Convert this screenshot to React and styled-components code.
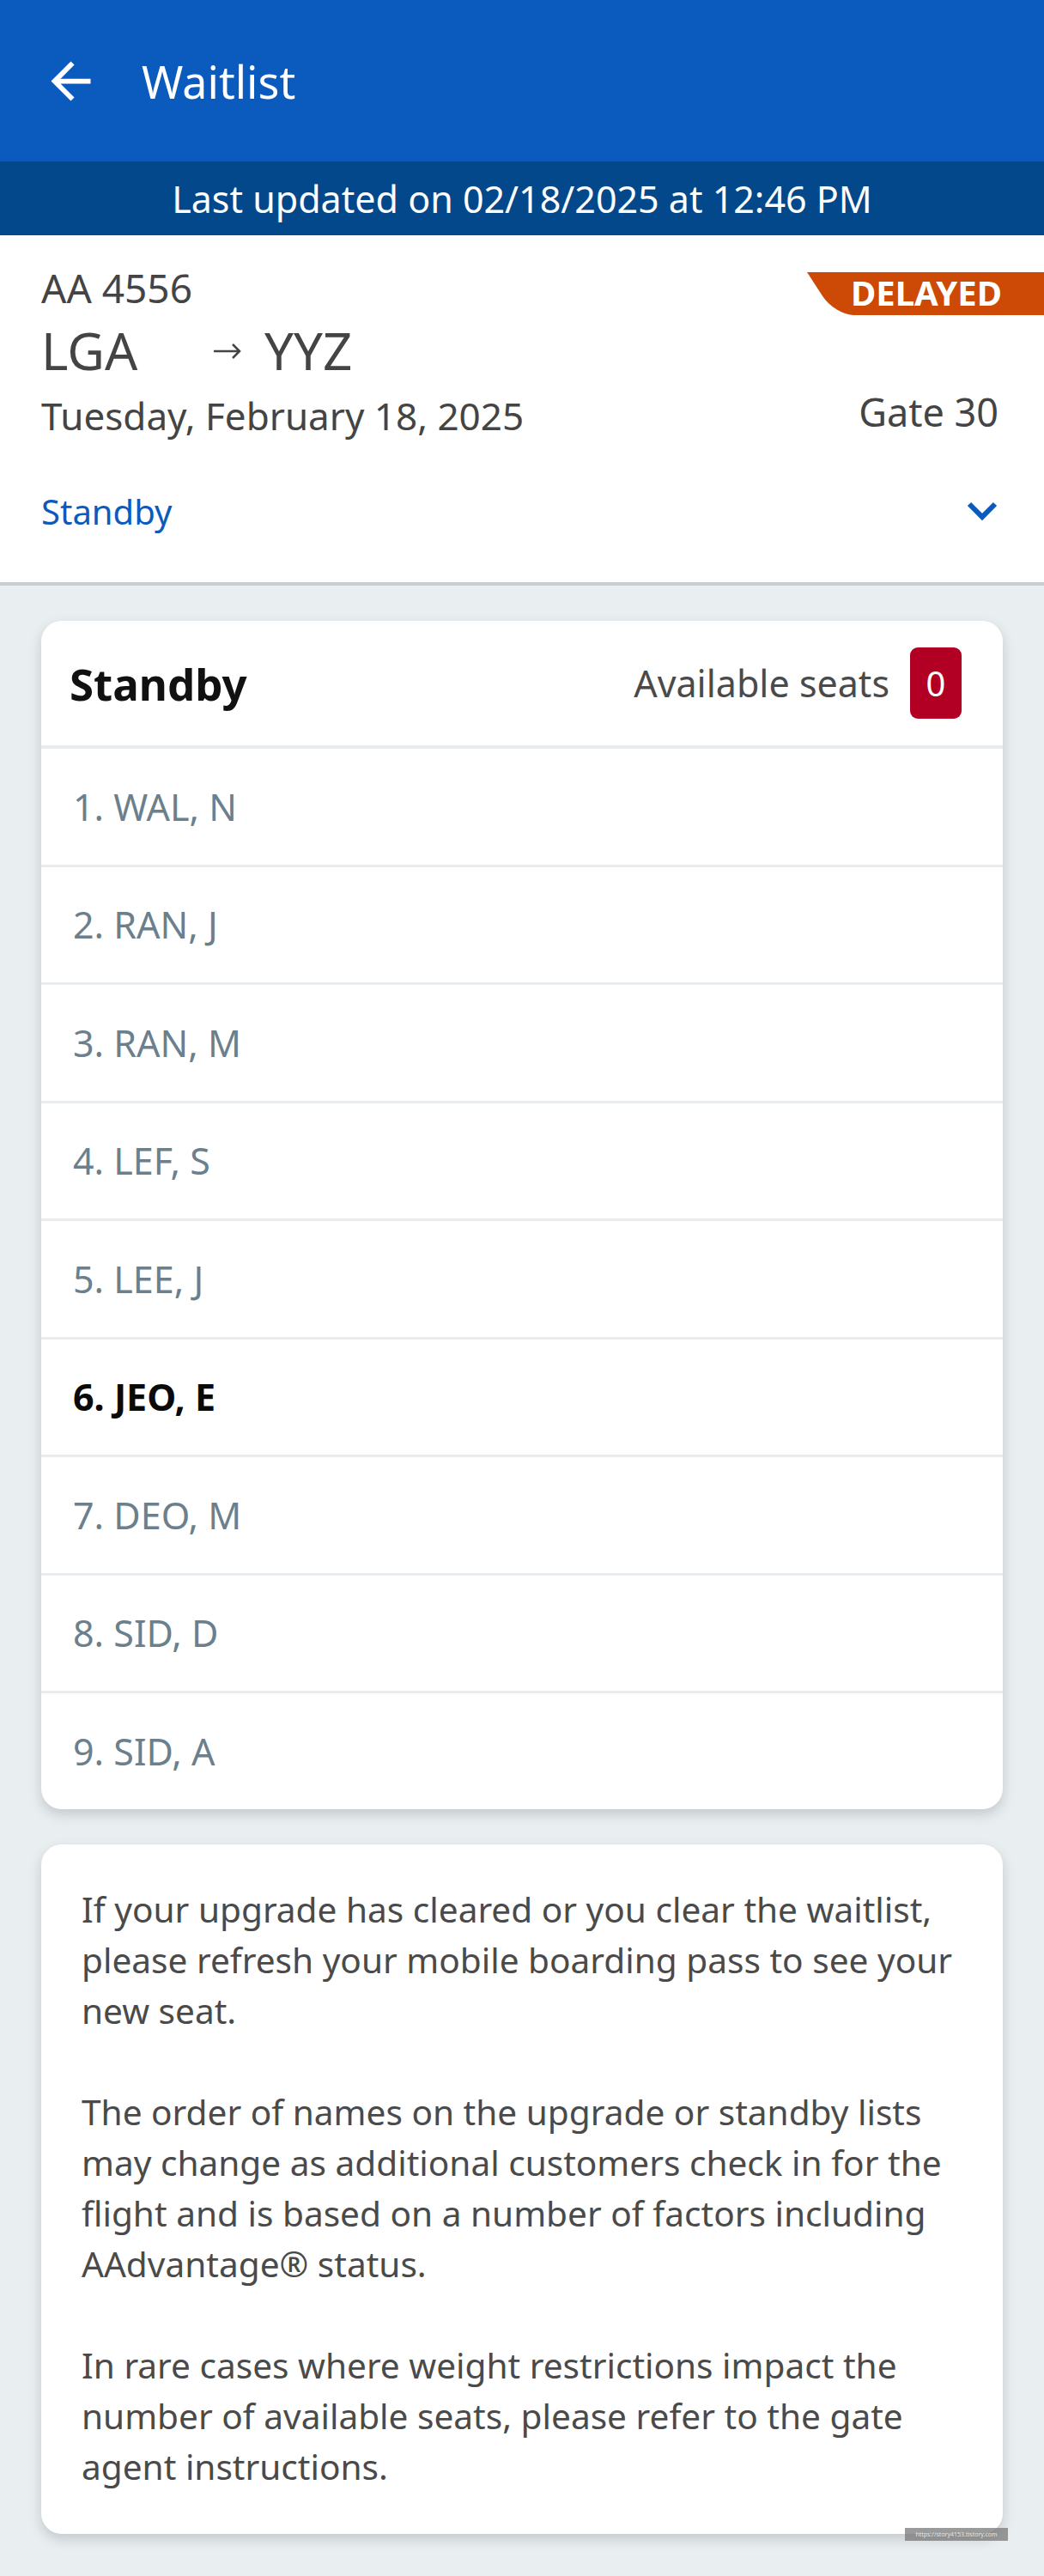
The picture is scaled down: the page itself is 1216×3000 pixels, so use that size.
import React from 'react';
import styled, { createGlobalStyle } from 'styled-components';

const GlobalStyle = createGlobalStyle`
  body {
    margin: 0;
    background: #e9eef0;
    font-family: 'Noto Sans', 'Open Sans', sans-serif;
  }
`;

const Page = styled.div`
  width: 1216px;
  min-height: 3000px;
  background: #e9eef0;
  overflow: hidden;
`;

const AppBar = styled.header`
  height: 188px;
  background: #0b5bbe;
  display: flex;
  align-items: center;
  padding-left: 48px;
  gap: 48px;
  color: #fff;

  svg {
    flex-shrink: 0;
  }
`;

const Title = styled.h1`
  margin: 0;
  font-size: 52px;
  font-weight: 400;
  line-height: normal;
`;

const UpdatedBar = styled.div`
  height: 86px;
  background: #02488a;
  color: #fff;
  font-size: 43px;
  display: flex;
  align-items: center;
  justify-content: center;
`;

const FlightInfo = styled.section`
  background: #fff;
  padding: 43px 53px 8px 48px;
  border-bottom: 4px solid #c9cdd2;
  color: #444;
`;

const Row = styled.div`
  display: flex;
  justify-content: space-between;
  align-items: ${(p) => p.$align || 'flex-start'};
`;

const FlightNumber = styled.div`
  font-size: 46px;
  line-height: 36px;
`;

const StatusTag = styled.div`
  position: relative;
  margin-right: -53px;
  height: 50px;
  padding: 0 49px 0 51px;
  color: #fff;
  font-size: 40px;
  font-weight: 700;
  line-height: 48px;
  z-index: 0;

  &::before {
    content: '';
    position: absolute;
    top: 0;
    left: 0;
    width: 120%;
    height: 100%;
    background: #cc4906;
    border-bottom-left-radius: 22px;
    transform: skewX(33deg);
    transform-origin: top left;
    z-index: -1;
  }
`;

const Route = styled.div`
  display: flex;
  align-items: center;
  font-size: 60px;
  line-height: 82px;
`;

const Airport = styled.span`
  min-width: ${(p) => p.$width || 'auto'};
`;

const RouteArrow = styled.svg`
  margin-right: 26px;
  margin-top: 2px;
`;

const DateText = styled.div`
  font-size: 44px;
  line-height: 71px;
`;

const Gate = styled.div`
  font-size: 45px;
  line-height: 61px;
`;

const ListToggle = styled.div`
  height: 150px;
  display: flex;
  align-items: center;
  justify-content: space-between;
  color: #0b5bbe;
  font-size: 40px;
`;

const Content = styled.main`
  padding: 41px 48px 48px;
  display: flex;
  flex-direction: column;
  gap: 41px;
`;

const Card = styled.div`
  position: relative;
  background: #fff;
  border-radius: 24px;
  box-shadow: 0 6px 14px rgba(60, 70, 80, 0.22);
  padding: ${(p) => p.$padding || '0'};
`;

const CardHeader = styled.div`
  height: 145px;
  padding: 0 48px 0 33px;
  display: flex;
  align-items: center;
  justify-content: space-between;
  border-bottom: 4px solid #e8ecee;
`;

const CardTitle = styled.h2`
  margin: 0;
  font-size: 51px;
  font-weight: 700;
  color: #111;
`;

const Seats = styled.div`
  display: flex;
  align-items: center;
  gap: 24px;
  font-size: 43px;
  color: #4a4a4a;
`;

const SeatCount = styled.span`
  width: 60px;
  height: 83px;
  border-radius: 9px;
  background: #b10024;
  color: #fff;
  display: flex;
  align-items: center;
  justify-content: center;
  font-size: 40px;
`;

const Passenger = styled.div`
  height: 134.5px;
  padding-left: 37px;
  display: flex;
  align-items: center;
  font-size: 43px;
  font-weight: ${(p) => (p.$current ? 700 : 400)};
  color: ${(p) => (p.$current ? '#0a0a0a' : '#6b7f8c')};
  border-bottom: 3px solid #e8ecee;

  &:last-child {
    border-bottom: none;
  }
`;

const Note = styled.p`
  margin: 0;
  font-size: 40.6px;
  line-height: 59px;
  color: #4a4a4a;

  & + & {
    margin-top: 59px;
  }
`;

const Watermark = styled.span`
  position: absolute;
  right: -6px;
  bottom: -8px;
  width: 120px;
  height: 15px;
  background: rgba(120, 120, 120, 0.75);
  color: #e6e6e6;
  font-size: 7px;
  line-height: 15px;
  text-align: center;
  white-space: nowrap;
`;

const standby = [
  'WAL, N',
  'RAN, J',
  'RAN, M',
  'LEF, S',
  'LEE, J',
  'JEO, E',
  'DEO, M',
  'SID, D',
  'SID, A',
];

const BackIcon = () => (
  <svg width="69" height="69" viewBox="0 0 24 24" fill="#fff">
    <path d="M20 11H7.83l5.59-5.59L12 4l-8 8 8 8 1.41-1.41L7.83 13H20v-2z" />
  </svg>
);

const Chevron = () => (
  <svg width="38" height="24" viewBox="0 0 38 24">
    <polyline
      points="4,4 19,19 34,4"
      fill="none"
      stroke="#0b5bbe"
      strokeWidth="6"
    />
  </svg>
);

const App = () => {
  return (
    <Page>
      <GlobalStyle />
      <AppBar>
        <BackIcon />
        <Title>Waitlist</Title>
      </AppBar>
      <UpdatedBar>Last updated on 02/18/2025 at 12:46 PM</UpdatedBar>

      <FlightInfo>
        <Row>
          <FlightNumber>AA 4556</FlightNumber>
          <StatusTag>DELAYED</StatusTag>
        </Row>
        <Route>
          <Airport $width="200px">LGA</Airport>
          <RouteArrow width="34" height="20" viewBox="0 0 34 20">
            <path
              d="M1 10h30M23 2l8 8-8 8"
              fill="none"
              stroke="#444"
              strokeWidth="2.5"
            />
          </RouteArrow>
          <Airport>YYZ</Airport>
        </Route>
        <Row>
          <DateText>Tuesday, February 18, 2025</DateText>
          <Gate>Gate 30</Gate>
        </Row>
        <ListToggle>
          <span>Standby</span>
          <Chevron />
        </ListToggle>
      </FlightInfo>

      <Content>
        <Card>
          <CardHeader>
            <CardTitle>Standby</CardTitle>
            <Seats>
              Available seats
              <SeatCount>0</SeatCount>
            </Seats>
          </CardHeader>
          {standby.map((name, i) => (
            <Passenger key={i} $current={name === 'JEO, E'}>
              {i + 1}. {name}
            </Passenger>
          ))}
        </Card>

        <Card $padding="46px 40px 49px 47px">
          <Note>
            If your upgrade has cleared or you clear the waitlist, please
            refresh your mobile boarding pass to see your new seat.
          </Note>
          <Note>
            The order of names on the upgrade or standby lists may change as
            additional customers check in for the flight and is based on a
            number of factors including AAdvantage® status.
          </Note>
          <Note>
            In rare cases where weight restrictions impact the number of
            available seats, please refer to the gate agent instructions.
          </Note>
          <Watermark>https://story4153.tistory.com</Watermark>
        </Card>
      </Content>
    </Page>
  );
};

export default App;
